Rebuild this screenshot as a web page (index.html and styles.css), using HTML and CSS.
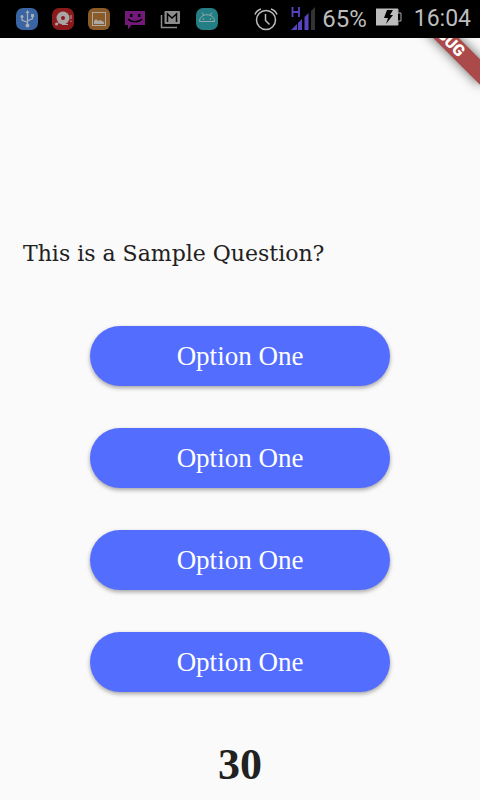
FILE: index.html
```html
<!DOCTYPE html>
<html lang="en">
<head>
<meta charset="utf-8">
<meta name="viewport" content="width=device-width, initial-scale=1">
<title>Quiz</title>
<link rel="stylesheet" href="styles.css">
</head>
<body>
<header class="status">
  <div class="notices">
    <svg class="icon" viewBox="0 0 22 22" aria-hidden="true"><rect width="22" height="22" rx="7" fill="#3965a4"/><g fill="none" stroke="#a9aeb5" stroke-width="1.3"><path d="M11.5 4v13M11.5 14.5L6 12V8.500M11.500 13L16.500 10.500V8"/></g><g fill="#a9aeb5"><path d="M11.500 2L9.500 5h4z"/><circle cx="11.500" cy="17.500" r="2"/><circle cx="6" cy="8.500" r="1.500"/><path d="M15 6h3v3h-3z"/></g></svg>
    <svg class="icon" viewBox="0 0 22 22" aria-hidden="true"><rect width="22" height="22" rx="7" fill="#8b1a1c"/><circle cx="11" cy="10" r="6.500" fill="#aaa5a5"/><circle cx="11" cy="10" r="2" fill="#8b1a1c"/><circle cx="4.500" cy="16" r="1.500" fill="#aaa5a5"/><path d="M5 15.500l3-1M10 16.500h6M19 7v4M19 12.500v1.500" fill="none" stroke="#aaa5a5"/></svg>
    <svg class="icon" viewBox="0 0 22 22" aria-hidden="true"><rect width="22" height="22" rx="6" fill="#8b5a29"/><rect x="4.500" y="4.500" width="13" height="13" fill="none" stroke="#aca7a1"/><path d="M6 16v-3l2-2 2 2 2-1 2 1 2 1v2z" fill="#aca7a1"/></svg>
    <svg class="icon" viewBox="0 0 22 22" aria-hidden="true"><path d="M1 3h20v14H7.500L4 21.500V17H1z" fill="#72197a"/><path d="M6 6h2.500v3H6zM14 6h2.500v3H14z"/><path d="M4 11c3 3.500 11 3.500 14 0" fill="none" stroke="#000" stroke-width="1.300"/></svg>
    <svg class="icon" viewBox="0 0 22 22" aria-hidden="true"><path d="M1.500 7v12.500H17" fill="none" stroke="#8c8c8c" stroke-width="1.500"/><rect x="4.500" y="3" width="15.500" height="13" rx="1" fill="#8c8c8c"/><path d="M7.500 14V6l4.500 4 4.500-4v8" fill="none" stroke="#000" stroke-width="1.500"/></svg>
    <svg class="icon" viewBox="0 0 22 22" aria-hidden="true"><rect width="22" height="22" rx="7" fill="#247f85"/><path d="M3.500 13.500c0-9 15-9 15 0zM6 4.500l2 3M16 4.500l-2 3" fill="none" stroke="#91a9aa"/><circle cx="7.500" cy="11" r=".8" fill="#91a9aa"/><circle cx="14.500" cy="11" r=".8" fill="#91a9aa"/></svg>
  </div>
  <div class="system">
    <svg class="alarm" viewBox="0 0 24 24" aria-hidden="true"><g fill="none" stroke="#bdbdbd" stroke-width="1.500"><circle cx="12" cy="13" r="9.500"/><path d="M11.500 7v6.500l4 4M1 7.500Q2.500 3.500 7 2M23 7.500Q21.500 3.500 17 2"/></g></svg>
    <svg class="signal" viewBox="0 0 24 24" aria-hidden="true"><path d="M1.500 1v10M8 1v10M1.500 6H8" fill="none" stroke="#5943c1" stroke-width="1.800"/><path d="M0 24l6-6v6zM7 17l4-4v11H7zM13.500 11l4-4v17h-4z" fill="#5943c1"/><path d="M20 5l4-4v23h-4z" fill="#333"/></svg>
    <span class="charge">65%</span>
    <svg class="battery" viewBox="0 0 26 18" aria-hidden="true"><path d="M0 .5h22v17H0z" fill="#bdbdbd"/><path d="M22 1v4h3v8h-3v4" fill="none" stroke="#aaa"/><path d="M11 2h6l-3 5h3l-7 9 2-6H8z"/></svg>
    <time>16:04</time>
  </div>
</header>
<main class="screen">
  <div class="corner"><span class="ribbon">DEBUG</span></div>
  <h1 class="question">This is a Sample Question?</h1>
  <div class="options">
    <button type="button">Option One</button>
    <button type="button">Option One</button>
    <button type="button">Option One</button>
    <button type="button">Option One</button>
  </div>
  <p class="timer">30</p>
</main>
</body>
</html>
```
FILE: styles.css
```css
* {
  box-sizing: border-box;
}

body {
  margin: 0;
  min-height: 100vh;
  display: flex;
  flex-direction: column;
  background: #fafafa;
  color: #212121;
}

.status {
  display: flex;
  justify-content: space-between;
  align-items: center;
  height: 38px;
  padding: 0 9px 0 16px;
  background: #000;
  color: #bdbdbd;
  font: 24px/38px Roboto, sans-serif;
}

.notices {
  display: flex;
  gap: 14px;
}

.icon {
  width: 22px;
  height: 22px;
}

.system {
  display: flex;
  align-items: center;
}

.system time {
  font-size: 23px;
}

.alarm {
  width: 24px;
  height: 24px;
  margin-right: 13px;
}

.signal {
  width: 24px;
  height: 24px;
  margin: 0 7px 2px 0;
}

.battery {
  width: 26px;
  height: 18px;
  margin: 0 12px 4px 9px;
}

.screen {
  position: relative;
  flex: 1;
  display: flex;
  flex-direction: column;
  padding-top: 200px;
}

.corner {
  position: absolute;
  top: 0;
  right: 0;
  width: 76px;
  height: 76px;
  overflow: hidden;
}

.ribbon {
  position: absolute;
  top: -11px;
  right: -24px;
  width: 120px;
  height: 18px;
  background: #ab4a4a;
  box-shadow: 0 0 12px rgba(0, 0, 0, 0.6);
  color: #fff;
  font: 900 16px/18px Roboto, sans-serif;
  text-align: center;
  transform: rotate(45deg);
}

.question {
  margin: 0 23px;
  font: 400 22px/32px "DejaVu Serif", serif;
}

.options {
  display: flex;
  flex-direction: column;
  align-items: center;
  gap: 42px;
  margin-top: 56px;
}

.options button {
  width: 62.5%;
  height: 60px;
  padding: 0;
  border: 0;
  border-radius: 30px;
  background: #536dfe;
  box-shadow: 0 2px 4px rgba(0, 0, 0, 0.35);
  color: #fff;
  font: 27px/60px "Liberation Serif", serif;
}

.timer {
  margin: 48px 0 0;
  font: bold 44px/50px "Liberation Serif", serif;
  text-align: center;
}
```
